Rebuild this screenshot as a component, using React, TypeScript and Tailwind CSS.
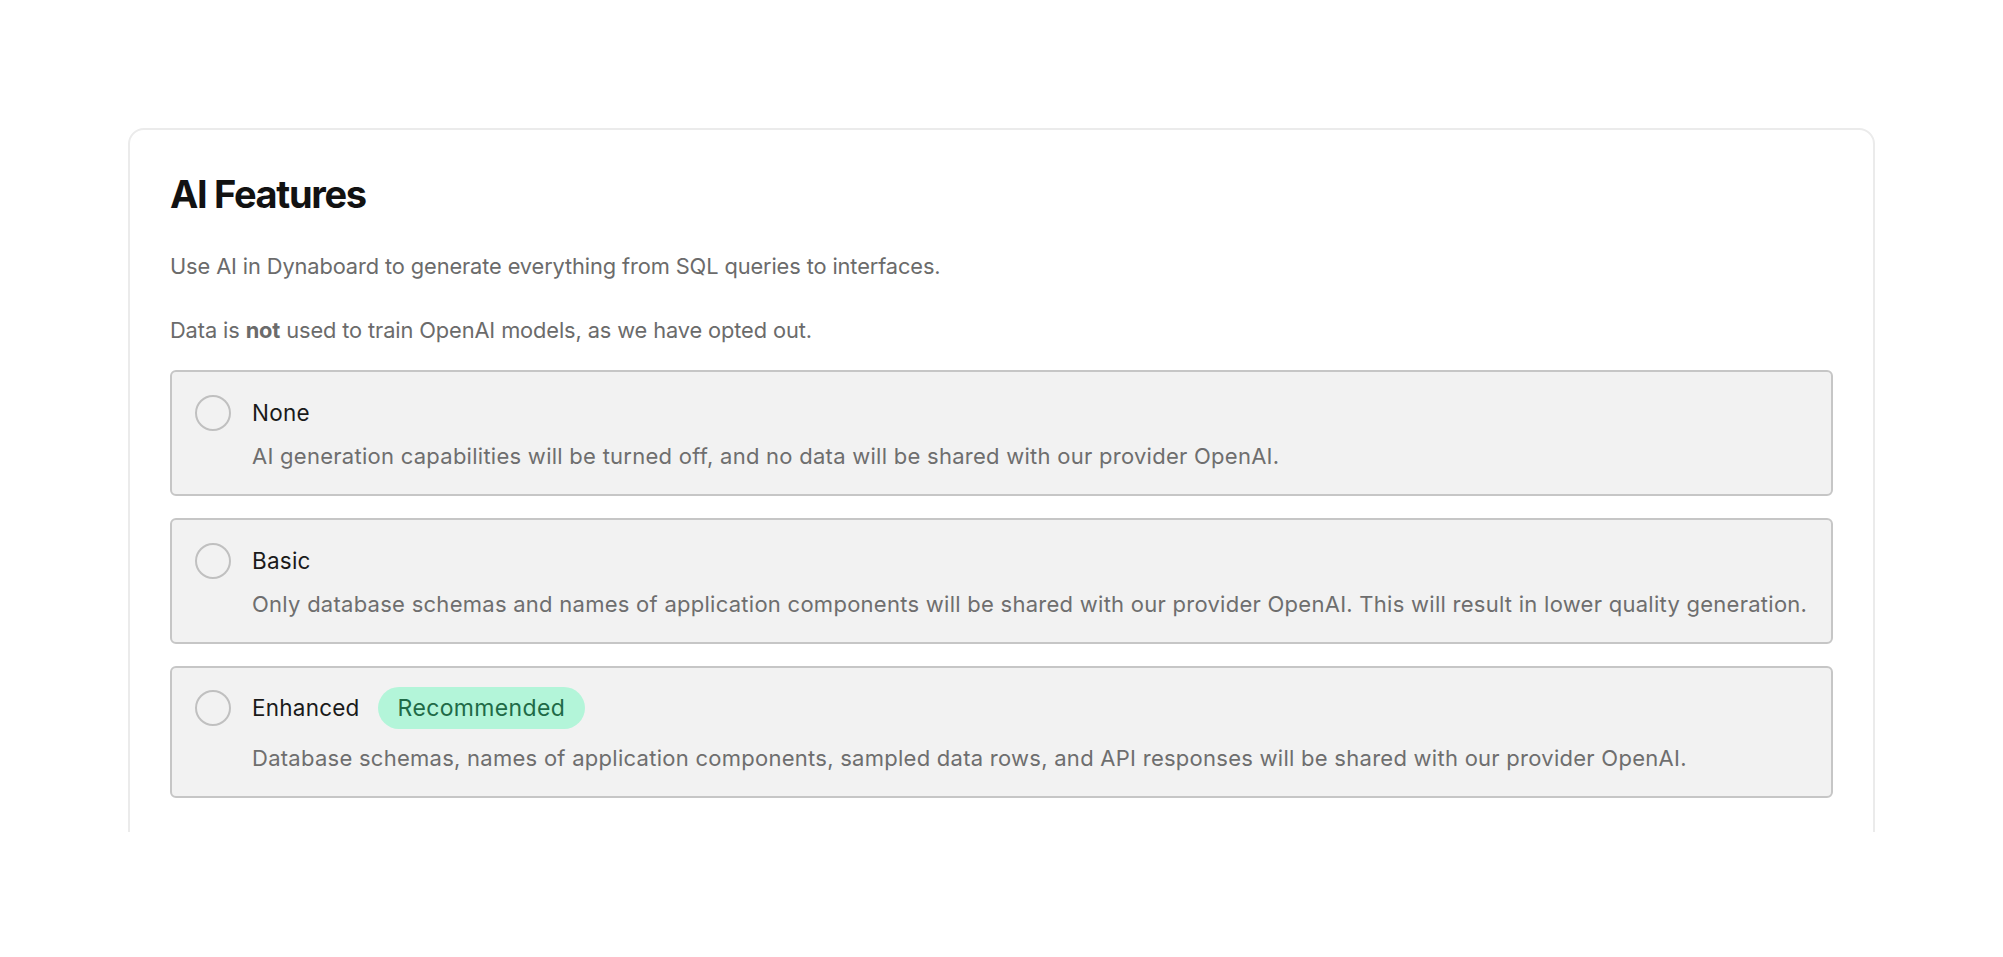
import { useState } from 'react';

type Level = 'none' | 'basic' | 'enhanced';

interface Option {
  id: Level;
  label: string;
  description: string;
  recommended?: boolean;
}

const options: Option[] = [
  {
    id: 'none',
    label: 'None',
    description: 'AI generation capabilities will be turned off, and no data will be shared with our provider OpenAI.',
  },
  {
    id: 'basic',
    label: 'Basic',
    description:
      'Only database schemas and names of application components will be shared with our provider OpenAI. This will result in lower quality generation.',
  },
  {
    id: 'enhanced',
    label: 'Enhanced',
    description:
      'Database schemas, names of application components, sampled data rows, and API responses will be shared with our provider OpenAI.',
    recommended: true,
  },
];

export default function App() {
  const [level, setLevel] = useState<Level | null>(null);

  return (
    <main className="min-h-[957px] bg-white font-['Inter','Liberation_Sans',sans-serif]">
      <div className="h-[832px] overflow-hidden px-[128px] pt-[128px]">
        <section className="rounded-2xl border-2 border-[#ebebeb] px-[40px] pt-[44px] pb-24">
          <h1 className="text-[38px] font-bold leading-[40px] tracking-[-0.035em] text-[#121212]">AI Features</h1>
          <p className="mt-[38px] text-[21.8px] leading-[28px] tracking-[-0.005em] text-[#6b6b6b]">
            Use AI in Dynaboard to generate everything from SQL queries to interfaces.
          </p>
          <p className="mt-[36px] text-[21.8px] leading-[28px] tracking-[-0.005em] text-[#6b6b6b]">
            Data is <strong className="font-bold">not</strong> used to train OpenAI models, as we have opted out.
          </p>

          <div className="mt-[26px] flex flex-col gap-[22px]">
            {options.map((opt) => (
              <label
                key={opt.id}
                className={`block cursor-pointer rounded-md border-2 border-[#c6c6c6] bg-[#f2f2f2] px-[23px] pb-[24px] ${
                  opt.recommended ? 'pt-[19px]' : 'pt-[23px]'
                }`}
              >
                <div className="flex items-center">
                  <input
                    type="radio"
                    name="ai-level"
                    className="sr-only"
                    checked={level === opt.id}
                    onChange={() => setLevel(opt.id)}
                  />
                  <span
                    className={`h-9 w-9 shrink-0 rounded-full border-2 ${
                      level === opt.id ? 'border-[6px] border-[#121212]' : 'border-[#c0c0c0]'
                    }`}
                  />
                  <span className="ml-[21px] text-[22.5px] leading-[28px] tracking-[0.01em] text-[#1a1a1a]">{opt.label}</span>
                  {opt.recommended && (
                    <span className="ml-[18px] flex h-[42px] items-center rounded-full bg-[#b3f5d9] px-5 text-[23px] tracking-[0.015em] text-[#1f6a47]">
                      Recommended
                    </span>
                  )}
                </div>
                <p
                  className={`pl-[57px] text-[22px] leading-[28px] tracking-[0.012em] text-[#6e6e6e] ${
                    opt.recommended ? 'mt-[15px]' : 'mt-[11px]'
                  }`}
                >
                  {opt.description}
                </p>
              </label>
            ))}
          </div>
        </section>
      </div>
    </main>
  );
}
